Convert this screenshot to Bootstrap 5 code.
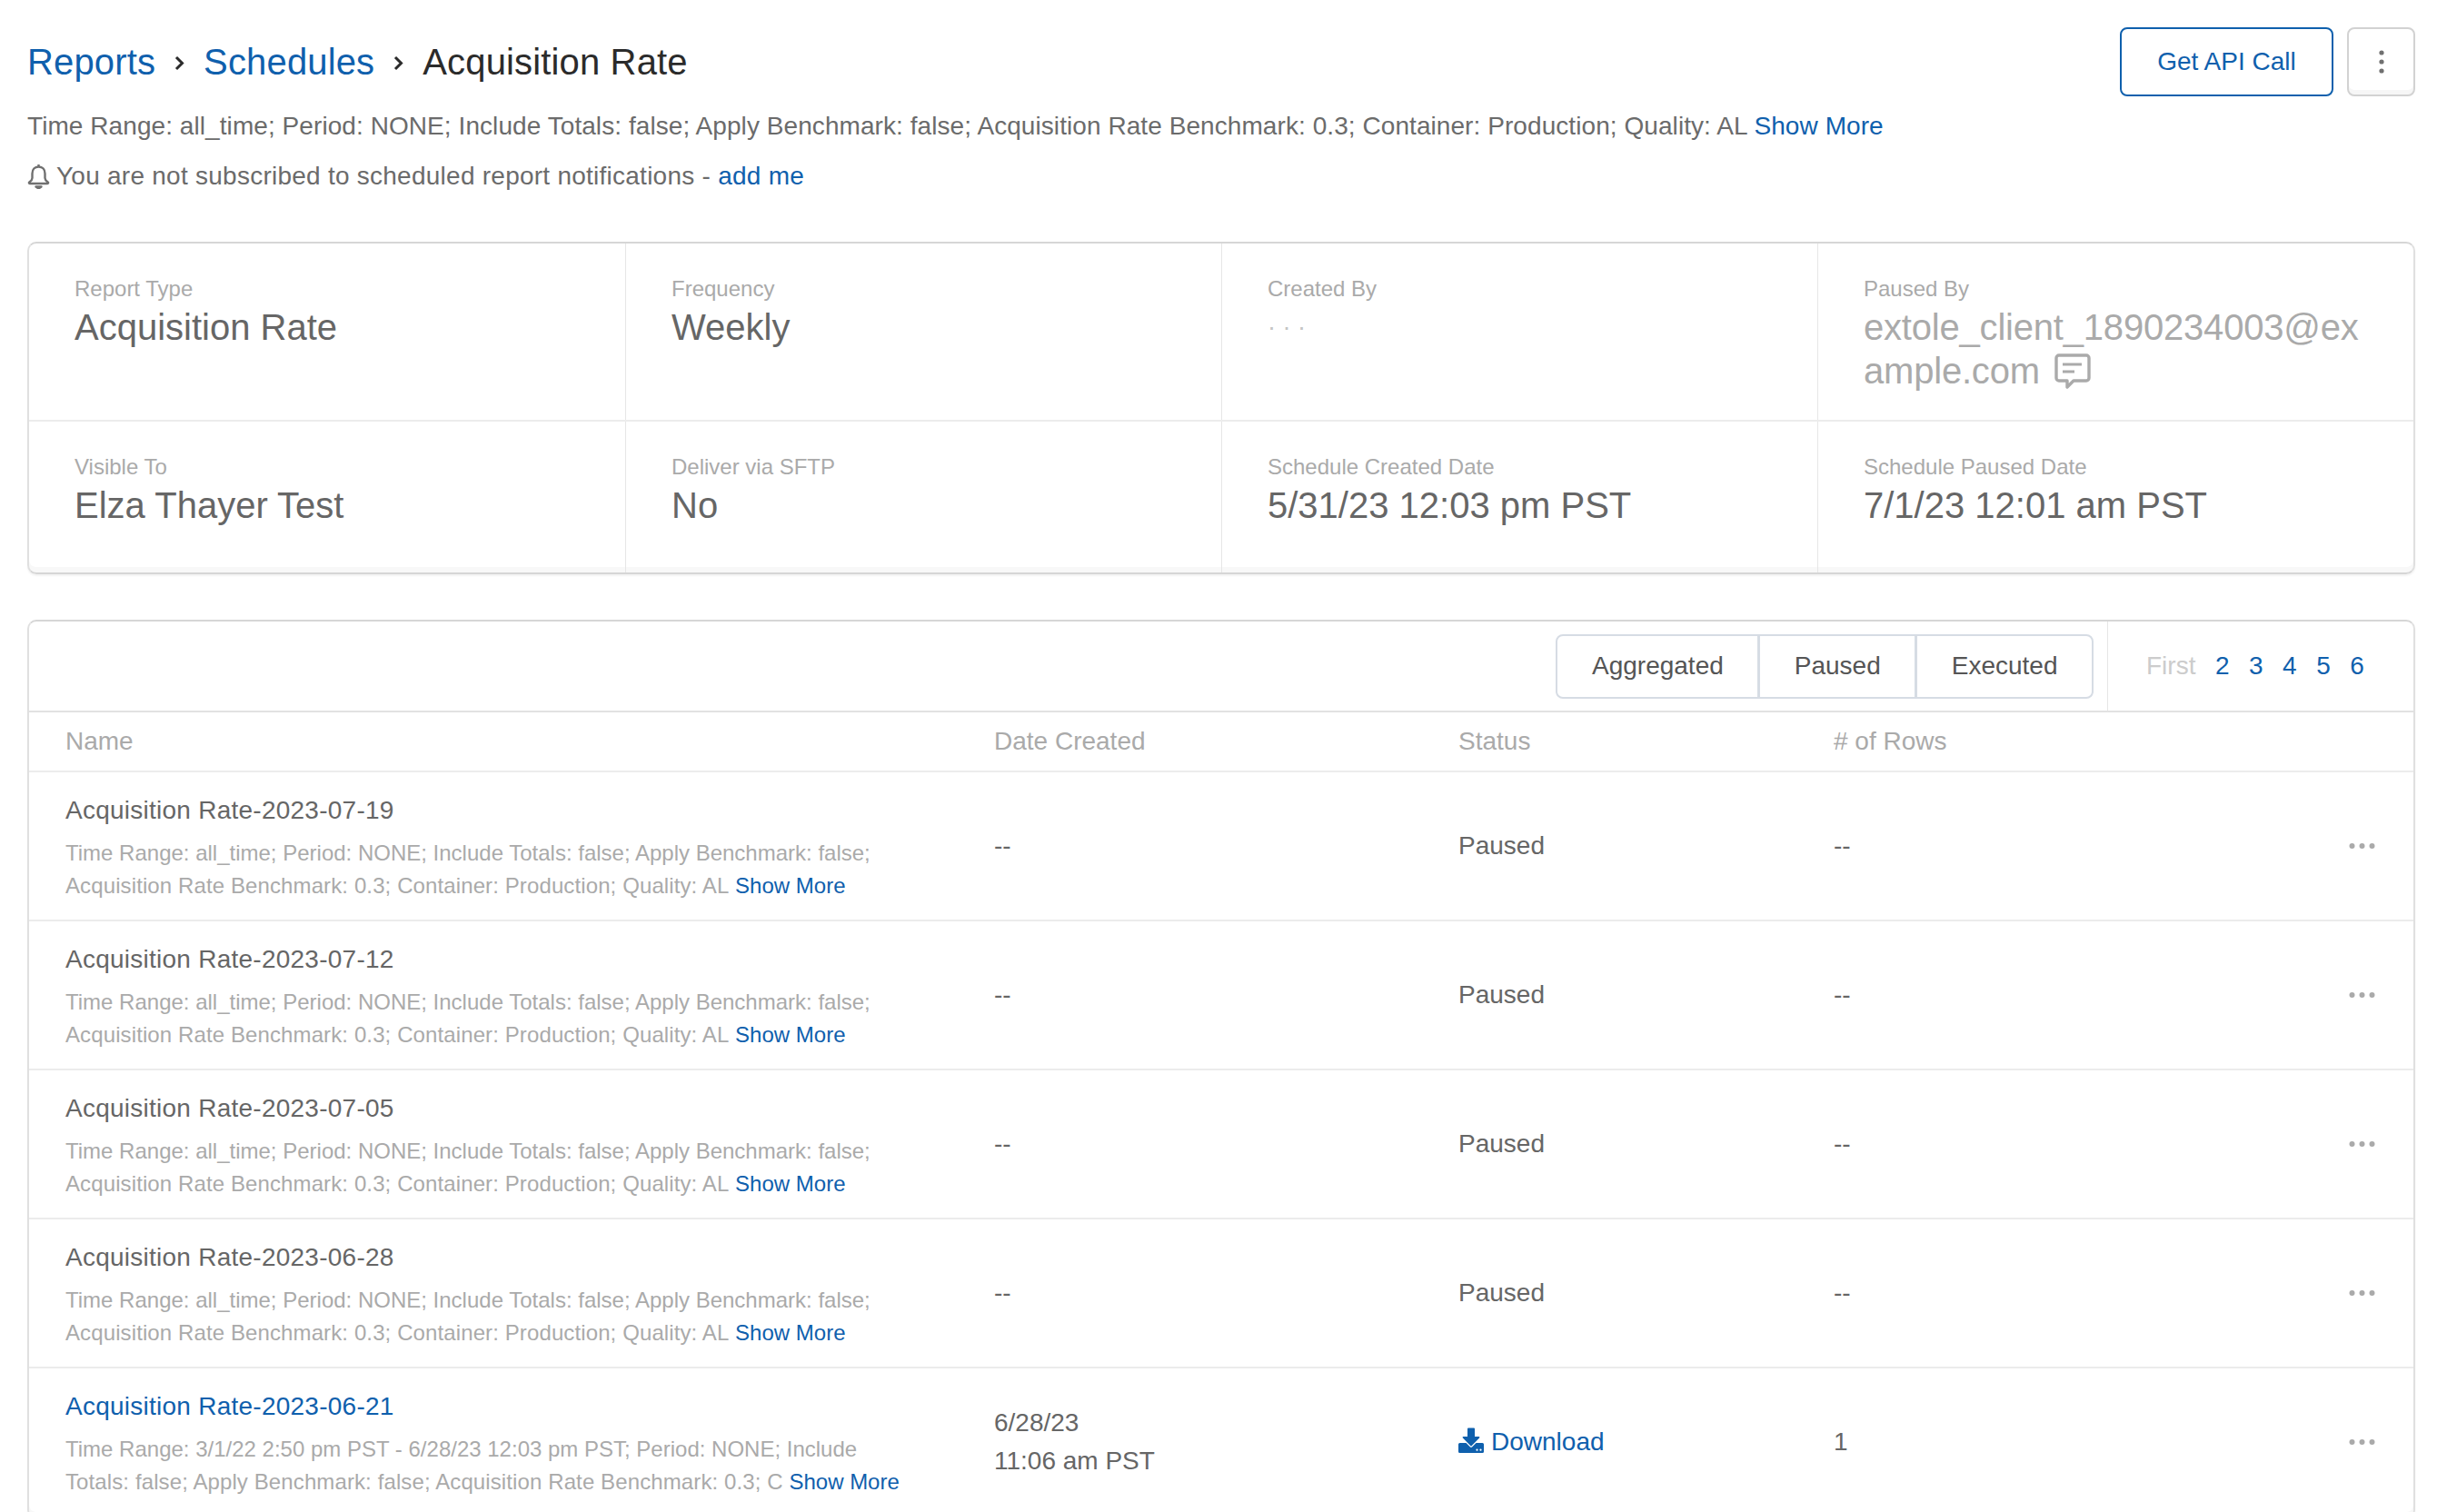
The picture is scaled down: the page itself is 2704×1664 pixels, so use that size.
<!DOCTYPE html>
<html lang="en">
<head>
    <meta charset="UTF-8">
    <meta name="viewport" content="width=device-width, initial-scale=1.0">
    <title>Acquisition Rate</title>
    <link href="https://cdn.jsdelivr.net/npm/bootstrap@5.3.3/dist/css/bootstrap.min.css" rel="stylesheet">
    <style>
        html { overflow: hidden; }
        body {
            font-family: "Liberation Sans", Arial, sans-serif;
            font-size: 28px;
            line-height: 36px;
            color: #6b6b6b;
            background-color: #fff;
            padding: 30px 46px 0 30px;
        }
        a { color: #0f60ad; text-decoration: none; }

        .page-head { height: 76px; }
        .head-actions { gap: 15px; }
        .breadcrumb { font-size: 40px; line-height: 48px; margin: 0; letter-spacing: .15px; }
        .breadcrumb-item + .breadcrumb-item { padding-left: 0; }
        .breadcrumb-item + .breadcrumb-item::before { display: none; }
        .breadcrumb-item.active { color: #2b2b2b; }
        .crumb-sep { width: 14px; height: 17px; margin: 0 20px 0 19px; vertical-align: 4px; }

        .btn-api {
            --bs-btn-color: #0f60ad;
            --bs-btn-border-color: #0f60ad;
            --bs-btn-hover-color: #0f60ad;
            --bs-btn-hover-border-color: #0f60ad;
            --bs-btn-hover-bg: #fff;
            --bs-btn-border-width: 2px;
            --bs-btn-border-radius: 8px;
            --bs-btn-font-size: 28px;
            --bs-btn-line-height: 36px;
            height: 76px;
            width: 235px;
            padding: 0;
        }
        .btn-kebab {
            --bs-btn-border-color: #d2d2d2;
            --bs-btn-hover-border-color: #d2d2d2;
            --bs-btn-border-width: 2px;
            --bs-btn-border-radius: 8px;
            height: 76px;
            width: 75px;
            padding: 0;
            box-shadow: inset 0 -5px 0 #f6f6f6;
        }

        .meta-line { margin: 15px 0 0; letter-spacing: .07px; }
        .notify-line { margin: 19px 0 54px; letter-spacing: .25px; }
        .bell { width: 25px; height: 28px; margin-right: 7px; vertical-align: -5px; }

        .panel {
            border: 2px solid #e0e0e0;
            border-top-color: #d6d6d6;
            border-bottom-color: #d6d6d6;
            border-radius: 10px;
            box-shadow: inset 0 -6px 0 #f8f8f8, 0 2px 2px rgba(0,0,0,.05);
        }
        .info-panel { margin-bottom: 50px; }
        .info-row + .info-row { border-top: 2px solid #ececec; }
        .info-cell { padding: 35px 50px 30px 50px; }
        .info-row + .info-row .info-cell { min-height: 166px; padding-bottom: 0; }
        .info-cell + .info-cell { border-left: 1px solid #e6e6e6; }
        .info-label { font-size: 24px; line-height: 30px; color: #aaa; margin-bottom: 3px; }
        .info-value { font-size: 40px; line-height: 48px; color: #666; }
        .info-value.muted { color: #aaa; word-break: break-all; letter-spacing: -.2px; }
        .info-dots { font-size: 27px; color: #c4c4c4; }
        .comment-icon { width: 40px; height: 40px; margin-left: 16px; vertical-align: -7px; }

        .toolbar { height: 100px; border-bottom: 2px solid #e2e2e2; }
        .btn-range {
            --bs-btn-color: #555;
            --bs-btn-border-color: #d6dce4;
            --bs-btn-hover-color: #555;
            --bs-btn-hover-border-color: #d6dce4;
            --bs-btn-hover-bg: #fff;
            --bs-btn-border-width: 2px;
            --bs-btn-border-radius: 8px;
            --bs-btn-font-size: 28px;
            --bs-btn-line-height: 36px;
            height: 71px;
            padding: 0 37.5px;
            display: flex;
            align-items: center;
        }
        .pager {
            width: 337px;
            margin-left: 15px;
            height: 100%;
            padding-left: 42px;
            gap: 21.5px;
            border-left: 1px solid #e6e6e6;
        }
        .pager-first { color: #ccc; }

        .report-table {
            table-layout: fixed;
            margin: 0;
            width: 100%;
            --bs-table-color: #666;
            --bs-table-border-color: #ececec;
        }
        .report-table > :not(caption) > * > * { padding: 0; border-bottom-width: 2px; vertical-align: middle; }
        .report-table th { font-weight: 400; color: #aaa; height: 65px; }
        .report-table td { height: 164px; }
        .report-table .cell-name { padding: 0 92px 0 40px; }
        .report-table td.cell-name { padding-top: 4px; }
        .report-table .cell-more { padding-right: 42px; text-align: right; }
        .row-title { margin-bottom: 11px; letter-spacing: .25px; }
        .row-desc { font-size: 24px; color: #aaa; }
        .desc-tail { letter-spacing: .11px; }
        .row-date { line-height: 42px; }
        .dl-icon { width: 28px; height: 28px; margin-right: 8px; vertical-align: -3px; }
        .more-icon { width: 29px; height: 8px; display: block; margin-left: auto; }
    </style>
</head>
<body>

<svg class="d-none">
    <symbol id="more" viewBox="0 0 29 8"><circle cx="3.5" cy="4" r="3"/><circle cx="14.5" cy="4" r="3"/><circle cx="25.5" cy="4" r="3"/></symbol>
</svg>

<header class="page-head d-flex justify-content-between align-items-center">
    <nav>
        <ol class="breadcrumb">
            <li class="breadcrumb-item"><a href="#">Reports</a></li>
            <li class="breadcrumb-item"><svg class="crumb-sep" viewBox="0 0 14 17" fill="none" stroke="#2b2b2b" stroke-width="3"><polyline points="4,2 10.500,8.500 4,15"/></svg><a href="#">Schedules</a></li>
            <li class="breadcrumb-item active"><svg class="crumb-sep" viewBox="0 0 14 17" fill="none" stroke="#2b2b2b" stroke-width="3"><polyline points="4,2 10.500,8.500 4,15"/></svg>Acquisition Rate</li>
        </ol>
    </nav>
    <div class="head-actions d-flex">
        <button class="btn btn-api" type="button">Get API Call</button>
        <button class="btn btn-kebab" type="button" aria-label="More">
            <svg width="6" height="26" viewBox="0 0 6 26" fill="#707070"><circle cx="3" cy="3" r="2.6"/><circle cx="3" cy="13" r="2.6"/><circle cx="3" cy="23" r="2.6"/></svg>
        </button>
    </div>
</header>

<p class="meta-line">Time Range: all_time; Period: NONE; Include Totals: false; Apply Benchmark: false; Acquisition Rate Benchmark: 0.3; Container: Production; Quality: AL <a href="#">Show More</a></p>
<p class="notify-line"><svg class="bell" viewBox="0 0 25 28" fill="none" stroke="#707070" stroke-width="2.4" stroke-linejoin="round"><path d="M12.5 3.5c-4.4 0-7 3.200-7 7.500v5c0 2-1.600 3.300-3.200 4.500-.8.600-.4 1.500.4 1.500h19.600c.8 0 1.200-.9.400-1.500-1.600-1.200-3.200-2.500-3.200-4.500v-5c0-4.300-2.600-7.500-7-7.500z"/><path d="M12.500 1v2.500"/><path d="M9.500 25.500h6l-3 2z" fill="#707070"/></svg>You are not subscribed to scheduled report notifications - <a href="#">add me</a></p>

<section class="panel info-panel">
    <div class="row g-0 info-row">
        <div class="col-3 info-cell">
            <div class="info-label">Report Type</div>
            <div class="info-value">Acquisition Rate</div>
        </div>
        <div class="col-3 info-cell">
            <div class="info-label">Frequency</div>
            <div class="info-value">Weekly</div>
        </div>
        <div class="col-3 info-cell">
            <div class="info-label">Created By</div>
            <div class="info-value info-dots">· · ·</div>
        </div>
        <div class="col-3 info-cell">
            <div class="info-label">Paused By</div>
            <div class="info-value muted">extole_client_1890234003@example.com<svg class="comment-icon" viewBox="0 0 40 40" fill="none" stroke="#aaa" stroke-width="3.4" stroke-linejoin="round"><path d="M5 2h30a3 3 0 0 1 3 3v22a3 3 0 0 1-3 3H21l-7 7v-7H5a3 3 0 0 1-3-3V5a3 3 0 0 1 3-3z"/><path d="M9 12h21M9 20h13" stroke-width="3.200"/></svg></div>
        </div>
    </div>
    <div class="row g-0 info-row">
        <div class="col-3 info-cell">
            <div class="info-label">Visible To</div>
            <div class="info-value">Elza Thayer Test</div>
        </div>
        <div class="col-3 info-cell">
            <div class="info-label">Deliver via SFTP</div>
            <div class="info-value">No</div>
        </div>
        <div class="col-3 info-cell">
            <div class="info-label">Schedule Created Date</div>
            <div class="info-value">5/31/23 12:03 pm PST</div>
        </div>
        <div class="col-3 info-cell">
            <div class="info-label">Schedule Paused Date</div>
            <div class="info-value">7/1/23 12:01 am PST</div>
        </div>
    </div>
</section>

<section class="panel report-panel">
    <div class="toolbar d-flex justify-content-end align-items-center">
        <div class="btn-group" role="group">
            <button class="btn btn-range" type="button">Aggregated</button>
            <button class="btn btn-range" type="button">Paused</button>
            <button class="btn btn-range" type="button">Executed</button>
        </div>
        <div class="pager d-flex align-items-center">
            <span class="pager-first">First</span>
            <a href="#">2</a>
            <a href="#">3</a>
            <a href="#">4</a>
            <a href="#">5</a>
            <a href="#">6</a>
        </div>
    </div>
    <table class="table report-table">
        <colgroup>
            <col style="width:1062px">
            <col style="width:511px">
            <col style="width:413px">
            <col>
            <col style="width:200px">
        </colgroup>
        <thead>
            <tr>
                <th class="cell-name">Name</th>
                <th>Date Created</th>
                <th>Status</th>
                <th># of Rows</th>
                <th></th>
            </tr>
        </thead>
        <tbody>
            <tr>
                <td class="cell-name">
                    <div class="row-title">Acquisition Rate-2023-07-19</div>
                    <div class="row-desc">Time Range: all_time; Period: NONE; Include Totals: false; Apply Benchmark: false; <span class="desc-tail">Acquisition Rate Benchmark: 0.3; Container: Production; Quality: AL</span> <a href="#">Show More</a></div>
                </td>
                <td>--</td>
                <td>Paused</td>
                <td>--</td>
                <td class="cell-more"><svg class="more-icon" fill="#aaa"><use href="#more"/></svg></td>
            </tr>
            <tr>
                <td class="cell-name">
                    <div class="row-title">Acquisition Rate-2023-07-12</div>
                    <div class="row-desc">Time Range: all_time; Period: NONE; Include Totals: false; Apply Benchmark: false; <span class="desc-tail">Acquisition Rate Benchmark: 0.3; Container: Production; Quality: AL</span> <a href="#">Show More</a></div>
                </td>
                <td>--</td>
                <td>Paused</td>
                <td>--</td>
                <td class="cell-more"><svg class="more-icon" fill="#aaa"><use href="#more"/></svg></td>
            </tr>
            <tr>
                <td class="cell-name">
                    <div class="row-title">Acquisition Rate-2023-07-05</div>
                    <div class="row-desc">Time Range: all_time; Period: NONE; Include Totals: false; Apply Benchmark: false; <span class="desc-tail">Acquisition Rate Benchmark: 0.3; Container: Production; Quality: AL</span> <a href="#">Show More</a></div>
                </td>
                <td>--</td>
                <td>Paused</td>
                <td>--</td>
                <td class="cell-more"><svg class="more-icon" fill="#aaa"><use href="#more"/></svg></td>
            </tr>
            <tr>
                <td class="cell-name">
                    <div class="row-title">Acquisition Rate-2023-06-28</div>
                    <div class="row-desc">Time Range: all_time; Period: NONE; Include Totals: false; Apply Benchmark: false; <span class="desc-tail">Acquisition Rate Benchmark: 0.3; Container: Production; Quality: AL</span> <a href="#">Show More</a></div>
                </td>
                <td>--</td>
                <td>Paused</td>
                <td>--</td>
                <td class="cell-more"><svg class="more-icon" fill="#aaa"><use href="#more"/></svg></td>
            </tr>
            <tr>
                <td class="cell-name">
                    <div class="row-title"><a href="#">Acquisition Rate-2023-06-21</a></div>
                    <div class="row-desc">Time Range: 3/1/22 2:50 pm PST - 6/28/23 12:03 pm PST; Period: NONE; Include <span class="desc-tail">Totals: false; Apply Benchmark: false; Acquisition Rate Benchmark: 0.3; C</span> <a href="#">Show More</a></div>
                </td>
                <td class="row-date">6/28/23<br>11:06 am PST</td>
                <td><a href="#"><svg class="dl-icon" viewBox="0 0 28 28" fill="#0f60ad"><path d="M11 .5h6a1 1 0 0 1 1 1V10h4.500c.8 0 1.200 1 .6 1.600l-8.600 8.600a.7.7 0 0 1-1 0L4.900 11.600c-.6-.6-.2-1.600.6-1.600H10V1.500a1 1 0 0 1 1-1z"/><path d="M0 18.500A1.500 1.500 0 0 1 1.500 17h7l4 4a2 2 0 0 0 3 0l4-4h7a1.500 1.500 0 0 1 1.500 1.500v8a1.500 1.500 0 0 1-1.500 1.500h-25A1.500 1.500 0 0 1 0 26.500z"/><circle cx="20.500" cy="24.700" r="1.100" fill="#fff"/><circle cx="24.500" cy="24.700" r="1.100" fill="#fff"/></svg>Download</a></td>
                <td>1</td>
                <td class="cell-more"><svg class="more-icon" fill="#aaa"><use href="#more"/></svg></td>
            </tr>
        </tbody>
    </table>
</section>

<script src="https://cdn.jsdelivr.net/npm/bootstrap@5.3.3/dist/js/bootstrap.bundle.min.js"></script>
</body>
</html>
